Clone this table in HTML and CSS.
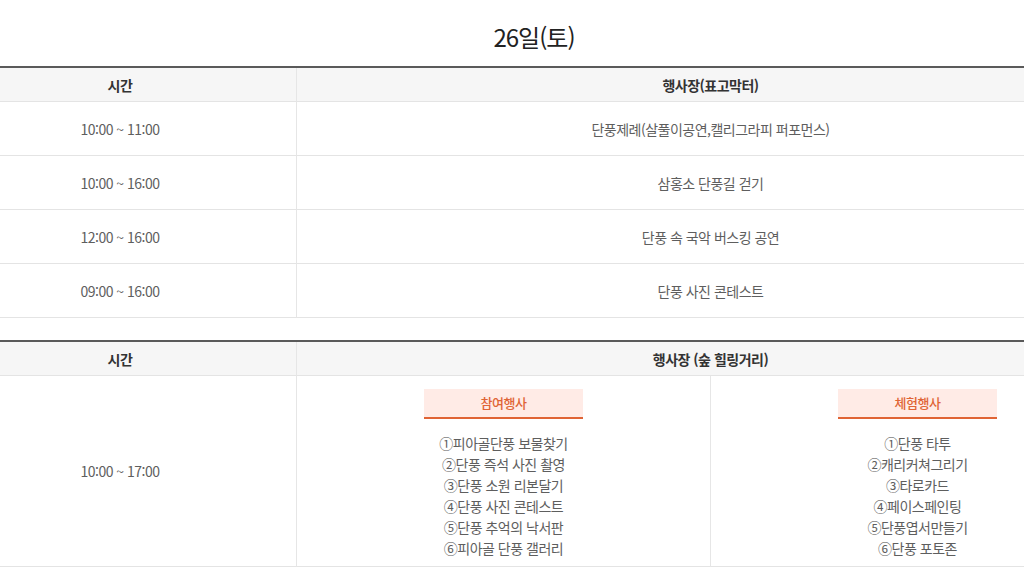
FILE: index.html
```html
<!DOCTYPE html>
<html lang="ko">
<head>
<meta charset="utf-8">
<link rel="stylesheet" href="styles.css">
</head>
<body>
<div class="page">
  <h2 class="day-title">26일(토)</h2>

  <div class="schedule schedule--one">
    <div class="cell head">시간</div>
    <div class="cell head divider">행사장(표고막터)</div>

    <div class="cell">10:00 ~ 11:00</div>
    <div class="cell divider">단풍제례(살풀이공연,캘리그라피 퍼포먼스)</div>

    <div class="cell">10:00 ~ 16:00</div>
    <div class="cell divider">삼홍소 단풍길 걷기</div>

    <div class="cell">12:00 ~ 16:00</div>
    <div class="cell divider">단풍 속 국악 버스킹 공연</div>

    <div class="cell">09:00 ~ 16:00</div>
    <div class="cell divider">단풍 사진 콘테스트</div>
  </div>

  <div class="schedule schedule--two">
    <div class="cell head">시간</div>
    <div class="cell head divider span2">행사장 (숲 힐링거리)</div>

    <div class="cell tall">10:00 ~ 17:00</div>
    <div class="cell divider program">
      <div class="program-tab">참여행사</div>
      <ul class="program-list">
        <li>①피아골단풍 보물찾기</li>
        <li>②단풍 즉석 사진 촬영</li>
        <li>③단풍 소원 리본달기</li>
        <li>④단풍 사진 콘테스트</li>
        <li>⑤단풍 추억의 낙서판</li>
        <li>⑥피아골 단풍 갤러리</li>
      </ul>
    </div>
    <div class="cell divider program">
      <div class="program-tab">체험행사</div>
      <ul class="program-list">
        <li>①단풍 타투</li>
        <li>②캐리커쳐그리기</li>
        <li>③타로카드</li>
        <li>④페이스페인팅</li>
        <li>⑤단풍엽서만들기</li>
        <li>⑥단풍 포토존</li>
      </ul>
    </div>
  </div>
</div>
</body>
</html>
```

FILE: styles.css
```css
html, body {
  margin: 0;
  padding: 0;
  background: #fff;
  overflow: hidden;
}

body {
  font-family: "Noto Sans CJK KR", "Noto Sans", sans-serif;
  color: #555;
}

.page {
  padding-top: 20px;
  width: 1180px;
  margin-left: -56px;
}

.day-title {
  margin: 0 0 12px;
  font-size: 24px;
  line-height: 34px;
  font-weight: 400;
  letter-spacing: -1px;
  color: #222;
  text-align: center;
}

.schedule {
  display: grid;
  border-top: 2px solid #5a5a5a;
}

.schedule--one {
  grid-template-columns: 352px 828px;
  margin-bottom: 22px;
}

.schedule--two {
  grid-template-columns: 352px 414px 414px;
}

.cell {
  display: flex;
  align-items: center;
  justify-content: center;
  height: 53px;
  border-bottom: 1px solid #e4e4e4;
  font-size: 14px;
  letter-spacing: -0.5px;
  color: #5e5e5e;
  text-align: center;
}

.cell.head {
  height: 33px;
  background: #f6f6f6;
  font-weight: 700;
  color: #333;
}

.divider {
  border-left: 1px solid #e6e6e6;
}

.span2 {
  grid-column: span 2;
}

.cell.tall {
  height: auto;
}

.cell.program {
  height: auto;
  flex-direction: column;
  justify-content: flex-start;
  padding: 13px 0 7px;
}

.program-tab {
  width: 159px;
  height: 28px;
  line-height: 28px;
  background: #ffebe6;
  border-bottom: 2px solid #e06435;
  color: #e06435;
  font-size: 13px;
  font-weight: 500;
}

.program-list {
  list-style: none;
  margin: 14px 0 0;
  padding: 0;
  font-size: 14px;
  line-height: 21px;
  color: #5e5e5e;
}
```
